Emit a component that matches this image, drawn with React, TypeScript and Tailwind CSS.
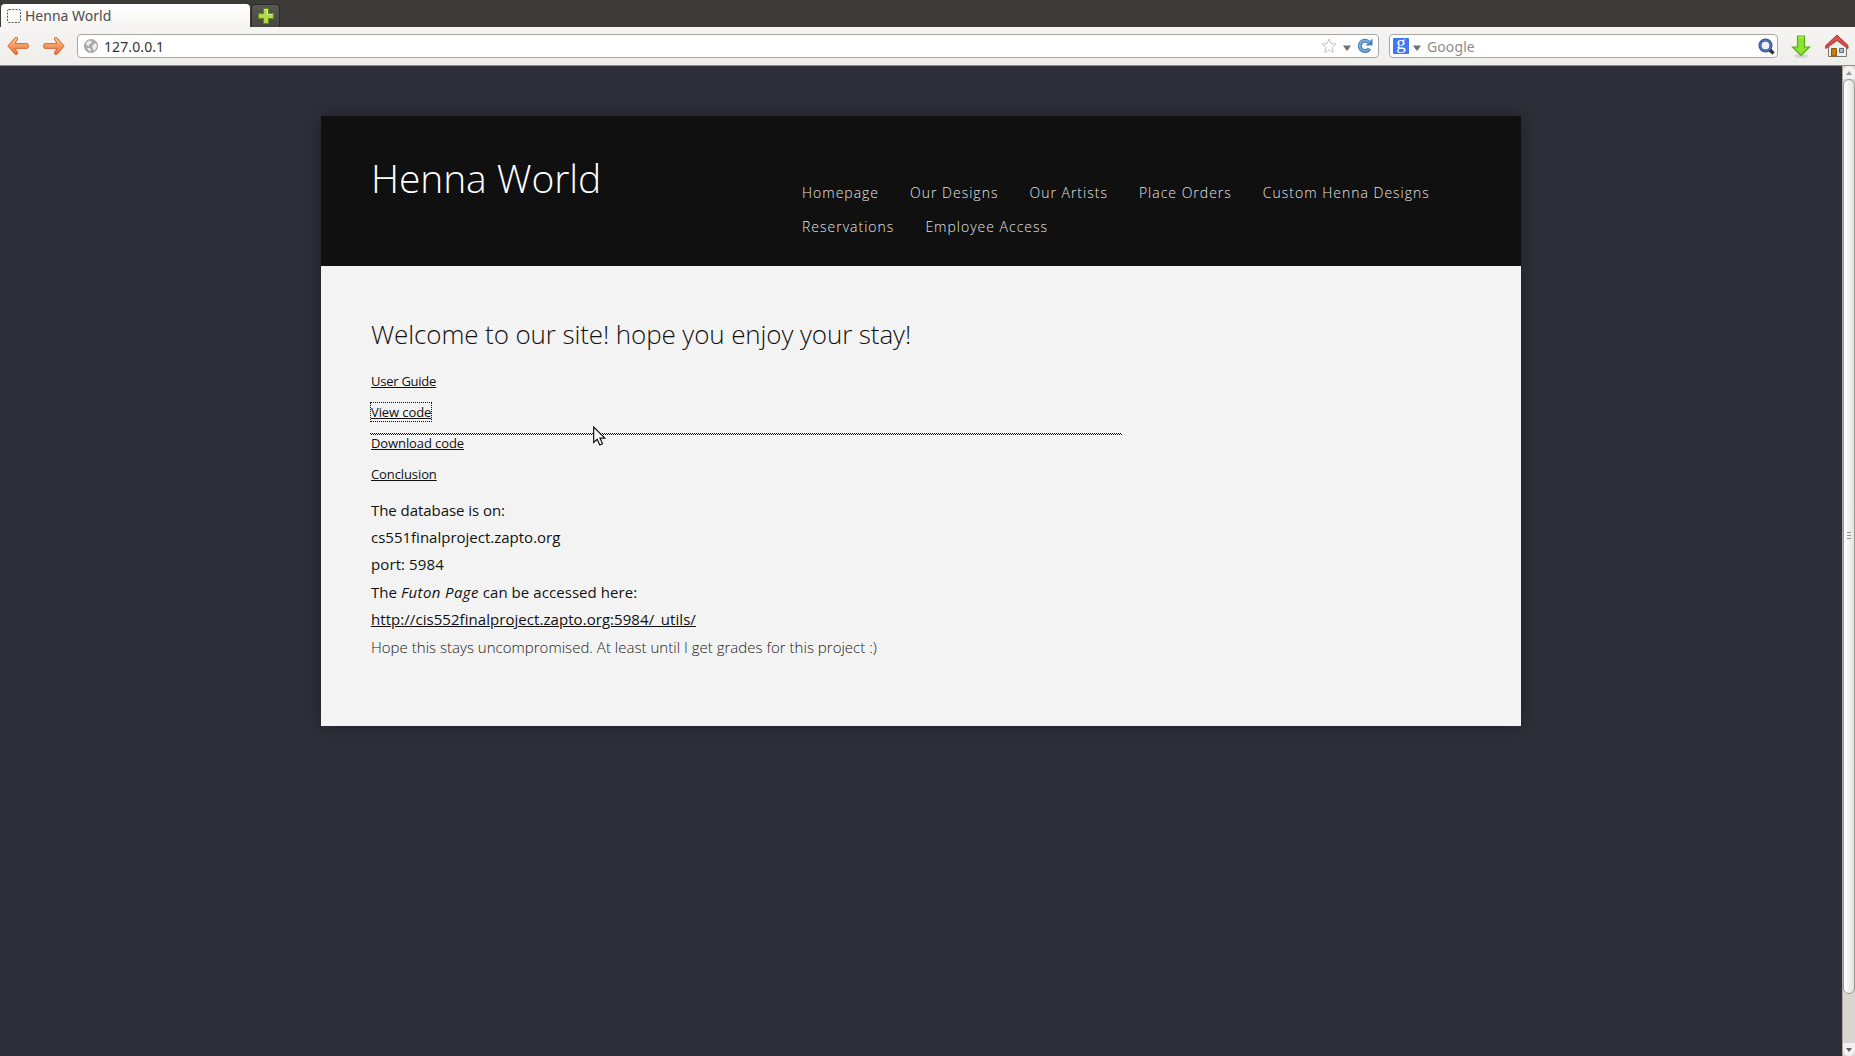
const uiFont = "font-['Noto_Sans','Open_Sans',sans-serif]";

const nav = ["Homepage", "Our Designs", "Our Artists", "Place Orders", "Custom Henna Designs", "Reservations", "Employee Access"];

function Texture({ id, color }: { id: string; color: string }) {
  return (
    <svg className="pointer-events-none absolute inset-0 h-full w-full" aria-hidden="true">
      <defs>
        <pattern id={id} width="4" height="4" patternUnits="userSpaceOnUse">
          <path d="M0 0h1v1h-1zM1 1h1v1h-1zM2 2h1v1h-1zM3 3h1v1h-1z" fill={color} />
        </pattern>
      </defs>
      <rect width="100%" height="100%" fill={`url(#${id})`} />
    </svg>
  );
}

function Arrow({ flip }: { flip?: boolean }) {
  return (
    <svg width="22" height="20" viewBox="0 0 22 20" className={flip ? "-scale-x-100" : ""}>
      <defs>
        <linearGradient id="orange" x1="0" y1="0" x2="0" y2="1">
          <stop offset="0" stopColor="#f8cc94" />
          <stop offset="1" stopColor="#ee6a2c" />
        </linearGradient>
      </defs>
      <path
        d="M.8 10 L8 1.800 Q10.500 .400 10.700 3 L8 7.600 H20 Q21.500 7.800 21.500 10 T20 12.400 H8 L10.700 16.600 Q10.500 19.600 8 18.200 Z"
        fill="url(#orange)"
        stroke="#d8683a"
        strokeLinejoin="round"
      />
    </svg>
  );
}

function TabBar() {
  return (
    <div className="flex h-[27px] items-end bg-[#3c3b37] pl-px">
      <div className="flex h-[23px] w-[249px] items-center rounded-t-[4px] bg-gradient-to-b from-white to-[#f5f4f2] pl-[6px]">
        <svg width="14" height="14" viewBox="0 0 14 14">
          <rect x=".5" y=".5" width="13" height="13" rx="1.5" fill="none" stroke="#555" strokeDasharray="2 1.3" />
        </svg>
        <span className="ml-[4px] text-[14px] leading-[20px] text-[#4c4c4c]">Henna World</span>
      </div>
      <div className="ml-px flex h-[23px] w-[29px] items-center justify-center rounded-t-[4px] border border-b-0 border-[#2c2b28] bg-gradient-to-b from-[#5a5953] to-[#464540]">
        <svg width="16" height="16" viewBox="0 0 16 16">
          <path d="M5.500.5h5v5h5v5h-5v5h-5v-5h-5v-5h5z" fill="#b4d74c" stroke="#5c8a1c" />
          <path d="M6.500 1.500h3v5h5" fill="none" stroke="#d8ec90" />
        </svg>
      </div>
    </div>
  );
}

function Toolbar() {
  return (
    <div className="flex h-[39px] items-center border-b border-[#8f8d89] bg-gradient-to-b from-[#f6f5f3] to-[#efedea] pl-[7px]">
      <Arrow />
      <div className="ml-[14px]"><Arrow flip /></div>
      <div className="ml-[12px] flex h-[24px] w-[1302px] items-center rounded-[4px] border border-[#a9a69f] bg-white pl-[6px] pr-[5px]">
        <svg width="14" height="14" viewBox="0 0 14 14">
          <circle cx="7" cy="7" r="6.600" fill="#aaa" stroke="#999" strokeWidth=".7" />
          <path d="M2 4 5 1.500l3 1-1 2-2 1v2l-2-1zM8 7l3-3 2 2-.5 3-2.500 3-1-2zM3 9l3 0 1 2-1 2z" fill="#eee" />
        </svg>
        <span className="ml-[6px] pt-[2px] text-[14px] leading-[22px] tracking-[0.1px] text-[#333]">127.0.0.1</span>
        <div className="ml-auto flex items-center">
          <svg width="16" height="16" viewBox="0 0 16 16" className="relative left-px">
            <path d="M8 1l2 4.600 5 .5-3.800 3.200L12.300 14.500 8 11.900 3.700 14.500 4.800 9.300 1 6.100l5-.5z" fill="#fff" stroke="#c4c4c4" strokeLinejoin="round" />
          </svg>
          <svg width="8" height="6" viewBox="0 0 8 6" className="ml-[7px] mt-[3px]"><path d="M0 .5h8L4.500 5.500h-1z" fill="#707070" /></svg>
          <svg width="16" height="16" viewBox="0 0 16 16" className="ml-[6px]">
            <path d="M12.500 10.500A5.200 5.200 0 1 1 11.500 4" fill="none" stroke="#4482bd" strokeWidth="4" />
            <path d="M15.500.5v7h-7z" fill="#4482bd" />
            <path d="M12 11A5.200 5.200 0 1 1 11.500 4" fill="none" stroke="#7fb2dc" strokeWidth="1.600" />
          </svg>
        </div>
      </div>
      <div className="ml-[10px] flex h-[24px] w-[389px] items-center rounded-[4px] border border-[#a9a69f] bg-white pl-[3px] pr-[2px]">
        <div className="flex h-4 w-4 items-center justify-center rounded-[1px] bg-[#3f78f5]">
          <span className="-mt-[6px] font-['Liberation_Serif',serif] text-[19px] leading-[16px] text-white">g</span>
        </div>
        <svg width="8" height="6" viewBox="0 0 8 6" className="ml-[4px] mt-[3px]"><path d="M0 .5h8L4.500 5.500h-1z" fill="#707070" /></svg>
        <span className="ml-[6px] pt-[2px] text-[14px] leading-[22px] tracking-[0.1px] text-[#8c8c8c]">Google</span>
        <svg width="17" height="17" viewBox="0 0 17 17" className="ml-auto">
          <path d="M11 11l4.500 4.500" stroke="#333" strokeWidth="3.500" />
          <circle cx="7.500" cy="7.500" r="5.500" fill="#eef0f6" stroke="#2f4a96" strokeWidth="3" />
          <circle cx="7.500" cy="7.500" r="5.500" fill="none" stroke="#6a86ca" />
        </svg>
      </div>
      <svg width="20" height="23" viewBox="0 0 20 23" className="ml-[13px]">
        <ellipse cx="10" cy="21" rx="7" ry="2" fill="#d5d3cf" />
        <path d="M6.500 1h7v11h5L10 20.500 1.500 12h5z" fill="#8ae234" stroke="#5cae10" strokeWidth="1.200" />
        <path d="M7.700 2.200h4.600" stroke="#c6f695" />
      </svg>
      <svg width="24" height="24" viewBox="0 0 24 24" className="ml-[14px]">
        <path d="M3.500 11v11.500h18V11L12 3.500z" fill="#eeeeec" stroke="#777" />
        <path d="M6.500 22V14.500h5V22z" fill="#c17d11" stroke="#8f5902" />
        <path d="M14.500 14.500h4v4h-4z" fill="#a9bccb" stroke="#5d6b78" />
        <path d="M12 1 .8 11.500v3L12 6.500l11 8v-3z" fill="#d94f4f" stroke="#a63333" strokeLinejoin="round" />
      </svg>
    </div>
  );
}

function Scrollbar() {
  return (
    <div className="flex w-[13px] flex-col border-l border-[#aaa7a2] bg-[#d9d6d2]">
      <div className="flex h-[13px] items-center justify-center rounded-t-[6px] bg-[#f3f2f0]">
        <svg width="6" height="4" viewBox="0 0 6 4"><path d="M3 0l3 4H0z" fill="#9a9894" /></svg>
      </div>
      <div className="flex h-[915px] flex-col items-center justify-center gap-[2px] rounded-[6px] border border-[#9b9894] bg-gradient-to-r from-white to-[#e4e2df] pb-[2px]">
        <i className="h-px w-[4px] bg-[#96938f]" />
        <i className="h-px w-[4px] bg-[#96938f]" />
        <i className="h-px w-[4px] bg-[#96938f]" />
      </div>
      <div className="mt-auto flex h-[13px] items-center justify-center rounded-b-[6px] bg-[#f3f2f0]">
        <svg width="6" height="4" viewBox="0 0 6 4"><path d="M0 0h6L3 4z" fill="#666460" /></svg>
      </div>
    </div>
  );
}

function FocusLine() {
  return (
    <div className="absolute -left-px top-[117px] w-[752px]">
      <div className="h-px bg-[repeating-linear-gradient(90deg,#111_0_1px,transparent_1px_2px)]" />
      <div className="h-px bg-[repeating-linear-gradient(90deg,transparent_0_1px,#111_1px_2px)]" />
      <svg width="13" height="21" viewBox="0 0 13 21" className="absolute left-[223px] -top-[7px]">
        <path d="M.7 1v15.500l3.600-3.300 2.500 5.800 2.700-1.200-2.500-5.600h4.900z" fill="#fff" stroke="#111" strokeWidth="1.200" />
      </svg>
    </div>
  );
}

export default function App() {
  return (
    <div className={"flex h-[1056px] w-[1855px] flex-col overflow-hidden " + uiFont}>
      <TabBar />
      <Toolbar />
      <div className="flex min-h-0 flex-1 font-['Open_Sans',sans-serif]">
        <div className="relative flex-1 bg-[#31313c] pt-[50px]">
          <Texture id="weave-page" color="#282832" />
          <main className="relative mx-auto w-[1200px] shadow-[0_0_18px_rgba(0,0,0,0.35)]">
            <header className="relative flex h-[150px] bg-[#121212] pl-[50px]">
              <Texture id="weave-header" color="#090909" />
              <h1 className="relative w-[431px] pt-[35px] text-[39px] font-light leading-[54px] tracking-[-0.1px] text-white">Henna World</h1>
              <nav className="relative flex w-[645px] flex-wrap content-start gap-x-[31px] pt-[60px] text-[14px] font-light leading-[34px] tracking-[1px] text-[#e4e4e4]">
                {nav.map((n) => <a key={n}>{n}</a>)}
              </nav>
            </header>
            <section className="relative h-[460px] bg-[#f6f6f6] pl-[50px] pt-[50px] text-[#111]">
              <Texture id="weave-body" color="#ececec" />
              <div className="relative">
                <h2 className="text-[26px] font-light leading-[36px] tracking-[-0.11px]">Welcome to our site! hope you enjoy your stay!</h2>
                <div className="mt-[14px] flex flex-col items-start text-[13px] leading-[31px] tracking-[-0.1px]">
                  <a className="underline tracking-[-0.25px]">User Guide</a>
                  <a className="relative">
                    <span className="underline">View code</span>
                    <span className="absolute -left-px -right-px top-[5px] h-[20px] border border-dotted border-[#111]" />
                  </a>
                  <a className="underline">Download code</a>
                  <a className="underline">Conclusion</a>
                </div>
                <FocusLine />
                <div className="mt-[7px] flex flex-col items-start text-[15px] leading-[27.3px]">
                  <span className="tracking-[-0.05px]">The database is on:</span>
                  <span>cs551finalproject.zapto.org</span>
                  <span className="-mt-[0.6px] mb-[0.6px] tracking-[0.1px]">port: 5984</span>
                  <span className="tracking-[0.06px]">The <em className="tracking-[0.38px]">Futon Page</em> can be accessed here:</span>
                  <a className="tracking-[0.055px] underline">http://cis552finalproject.zapto.org:5984/_utils/</a>
                  <span className="mt-[0.6px] font-light tracking-[0.02px] text-[#222]">Hope this stays uncompromised. At least until I get grades for this project :)</span>
                </div>
              </div>
            </section>
          </main>
        </div>
        <Scrollbar />
      </div>
    </div>
  );
}
